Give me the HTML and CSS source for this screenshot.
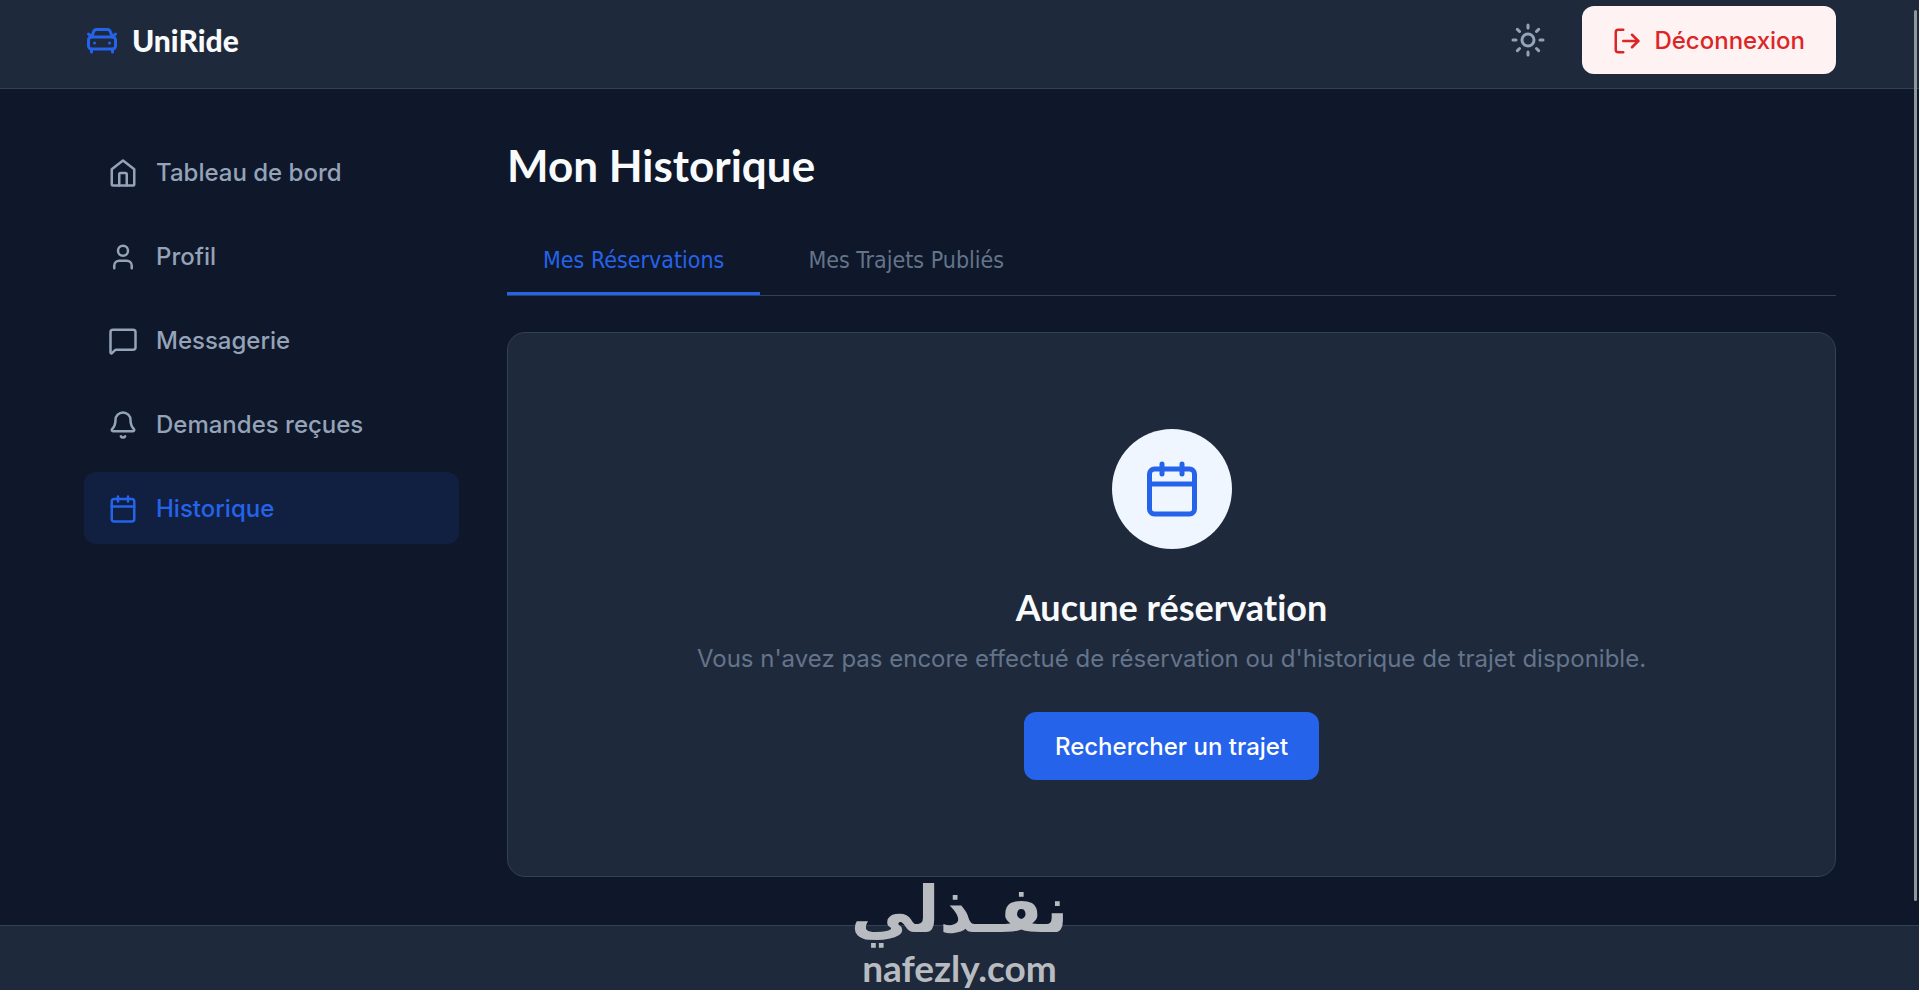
FILE: index.html
```html
<!DOCTYPE html>
<html lang="fr">
<head>
    <meta charset="UTF-8">
    <meta name="viewport" content="width=device-width, initial-scale=1.0">
    <title>UniRide - Mon Historique</title>
    <link rel="stylesheet" href="styles.css">
</head>
<body>
    <header class="header">
        <a class="logo" href="#">
            <svg class="icon logo-icon" viewBox="0 0 24 24"><path d="m21 8-2 2-1.5-3.7A2 2 0 0 0 15.646 5H8.4a2 2 0 0 0-1.903 1.257L5 10 3 8"/><path d="M7 14h.01"/><path d="M17 14h.01"/><rect width="18" height="8" x="3" y="10" rx="2"/><path d="M5 18v2"/><path d="M19 18v2"/></svg>
            UniRide
        </a>
        <div class="header-actions">
            <button class="theme-btn" aria-label="Changer de thème">
                <svg class="icon sun-icon" viewBox="0 0 24 24"><circle cx="12" cy="12" r="4"/><path d="M12 2v2M12 20v2M4.93 4.93l1.41 1.41M17.66 17.66l1.41 1.41M2 12h2M20 12h2M6.34 17.66l-1.41 1.41M19.07 4.93l-1.41 1.41"/></svg>
            </button>
            <button class="btn btn-logout">
                <svg class="icon" viewBox="0 0 24 24"><path d="m16 17 5-5-5-5"/><path d="M21 12H9"/><path d="M9 21H5a2 2 0 0 1-2-2V5a2 2 0 0 1 2-2h4"/></svg>
                Déconnexion
            </button>
        </div>
    </header>

    <div class="layout">
        <nav class="sidebar">
            <a class="nav-item" href="#">
                <svg class="icon" viewBox="0 0 24 24"><path d="m3 9 9-7 9 7v12a1 1 0 0 1-1 1H4a1 1 0 0 1-1-1z"/><path d="M9 22v-9a1 1 0 0 1 1-1h4a1 1 0 0 1 1 1v9"/></svg>
                Tableau de bord
            </a>
            <a class="nav-item" href="#">
                <svg class="icon" viewBox="0 0 24 24"><path d="M19 21v-2a4 4 0 0 0-4-4H9a4 4 0 0 0-4 4v2"/><circle cx="12" cy="7" r="4"/></svg>
                Profil
            </a>
            <a class="nav-item" href="#">
                <svg class="icon" viewBox="0 0 24 24"><path d="M22 17a2 2 0 0 1-2 2H6.828a2 2 0 0 0-1.414.586l-2.202 2.202A.71.71 0 0 1 2 21.286V5a2 2 0 0 1 2-2h16a2 2 0 0 1 2 2z"/></svg>
                Messagerie
            </a>
            <a class="nav-item" href="#">
                <svg class="icon" viewBox="0 0 24 24"><path d="M10.268 21a2 2 0 0 0 3.464 0"/><path d="M3.262 15.326A1 1 0 0 0 4 17h16a1 1 0 0 0 .74-1.673C19.41 13.956 18 12.499 18 8A6 6 0 0 0 6 8c0 4.499-1.411 5.956-2.738 7.326"/></svg>
                Demandes reçues
            </a>
            <a class="nav-item active" href="#">
                <svg class="icon" viewBox="0 0 24 24"><path d="M8 2v4M16 2v4"/><rect width="18" height="18" x="3" y="4" rx="2"/><path d="M3 10h18"/></svg>
                Historique
            </a>
        </nav>

        <main class="content">
            <h1>Mon Historique</h1>
            <div class="tabs">
                <button class="tab active">Mes Réservations</button>
                <button class="tab">Mes Trajets Publiés</button>
            </div>
            <section class="empty-card">
                <div class="empty-icon">
                    <svg class="icon" viewBox="0 0 24 24"><path d="M8 2v4M16 2v4"/><rect width="18" height="18" x="3" y="4" rx="2"/><path d="M3 10h18"/></svg>
                </div>
                <h3>Aucune réservation</h3>
                <p>Vous n'avez pas encore effectué de réservation ou d'historique de trajet disponible.</p>
                <button class="btn btn-primary">Rechercher un trajet</button>
            </section>
        </main>
    </div>

    <footer class="footer"></footer>

    <div class="watermark">
        <span class="watermark-ar" lang="ar" dir="rtl">نفـذلي</span>
        <span class="watermark-en">nafezly.com</span>
    </div>
    <div class="scroll-thumb"></div>
</body>
</html>
```

FILE: styles.css
```css
:root {
    --bg: #0f172a;
    --surface: #1e293b;
    --border: #334155;
    --primary: #2563eb;
    --text: #f8fafc;
    --text-muted: #94a3b8;
    --text-light: #64748b;
}

* {
    box-sizing: border-box;
    margin: 0;
    padding: 0;
}

body {
    display: flex;
    flex-direction: column;
    height: 100vh;
    overflow: hidden;
    background-color: var(--bg);
    color: var(--text);
    font-family: Inter, sans-serif;
    font-size: 24px;
    line-height: 36px;
}

a {
    color: inherit;
    text-decoration: none;
}

button {
    border: none;
    background: none;
    cursor: pointer;
}

h1,
h3,
.logo {
    font-family: Lato, sans-serif;
    font-weight: 900;
    font-variant-ligatures: none;
}

.icon {
    width: 30px;
    height: 30px;
    flex-shrink: 0;
    fill: none;
    stroke: currentColor;
    stroke-width: 2;
    stroke-linecap: round;
    stroke-linejoin: round;
}

.header {
    display: flex;
    justify-content: space-between;
    align-items: center;
    padding: 6px 83px 14px 84px;
    background-color: var(--surface);
    border-bottom: 1px solid var(--border);
}

.logo {
    display: flex;
    align-items: center;
    gap: 12px;
    font-size: 30px;
}

.logo-icon {
    width: 36px;
    height: 36px;
    color: var(--primary);
}

.header-actions {
    display: flex;
    align-items: center;
    gap: 36px;
}

.theme-btn {
    display: flex;
    color: var(--text-muted);
}

.sun-icon {
    width: 36px;
    height: 36px;
}

.btn {
    display: flex;
    align-items: center;
    justify-content: center;
    gap: 12px;
    padding: 17px 31px 15px;
    border-radius: 12px;
    font-family: inherit;
    font-size: 24px;
    font-weight: 500;
    line-height: 36px;
}

.btn-logout {
    padding-left: 30px;
    background-color: #fef2f2;
    color: #dc2626;
}

.btn-primary {
    background-color: var(--primary);
    color: #fff;
}

.layout {
    display: flex;
    align-items: flex-start;
    gap: 48px;
    padding: 47px 83px 48px 84px;
}

.sidebar {
    display: flex;
    flex-direction: column;
    gap: 12px;
    width: 375px;
    flex-shrink: 0;
}

.nav-item {
    display: flex;
    align-items: center;
    gap: 18px;
    padding: 19px 24px 17px;
    border-radius: 12px;
    color: var(--text-muted);
    font-weight: 500;
}

.nav-item.active {
    background-color: rgba(37, 99, 235, 0.12);
    color: var(--primary);
}

.content {
    flex: 1;
}

h1 {
    margin-bottom: 38px;
    font-size: 44px;
    font-weight: 700;
    line-height: 58px;
}

.tabs {
    display: flex;
    gap: 12px;
    margin-bottom: 36px;
    border-bottom: 1px solid var(--border);
}

.tab {
    padding: 12px 36px 15px;
    border-bottom: 3px solid transparent;
    color: var(--text-light);
    font-family: "DejaVu Sans Condensed", "DejaVu Sans", sans-serif;
    font-size: 23px;
    line-height: 33px;
}

.tab.active {
    border-bottom-color: var(--primary);
    color: var(--primary);
}

.empty-card {
    display: flex;
    flex-direction: column;
    align-items: center;
    padding: 96px 48px;
    background-color: var(--surface);
    border: 1px solid var(--border);
    border-radius: 18px;
    text-align: center;
}

.empty-icon {
    display: flex;
    align-items: center;
    justify-content: center;
    width: 120px;
    height: 120px;
    margin-bottom: 35px;
    border-radius: 50%;
    background-color: #eff6ff;
    color: var(--primary);
}

.empty-icon .icon {
    width: 60px;
    height: 60px;
}

h3 {
    margin-bottom: 11px;
    font-size: 36px;
    font-weight: 700;
    line-height: 46px;
}

.empty-card p {
    margin-bottom: 35px;
    color: var(--text-light);
}

.footer {
    flex: 1;
    background-color: var(--surface);
    border-top: 1px solid var(--border);
}

.watermark {
    position: absolute;
    bottom: 0;
    left: 50%;
    display: flex;
    flex-direction: column;
    align-items: center;
    transform: translateX(-50%);
    color: #b8bcc0;
    font-family: "DejaVu Sans", sans-serif;
    font-weight: 700;
    pointer-events: none;
}

.watermark-ar {
    font-size: 64px;
    line-height: 72px;
}

.watermark-en {
    font-family: Lato, sans-serif;
    font-size: 37px;
    line-height: 44px;
}

.scroll-thumb {
    position: absolute;
    top: 10px;
    right: 2px;
    width: 3px;
    height: 90vh;
    border-radius: 2px;
    background-color: #8f999b;
}
```
